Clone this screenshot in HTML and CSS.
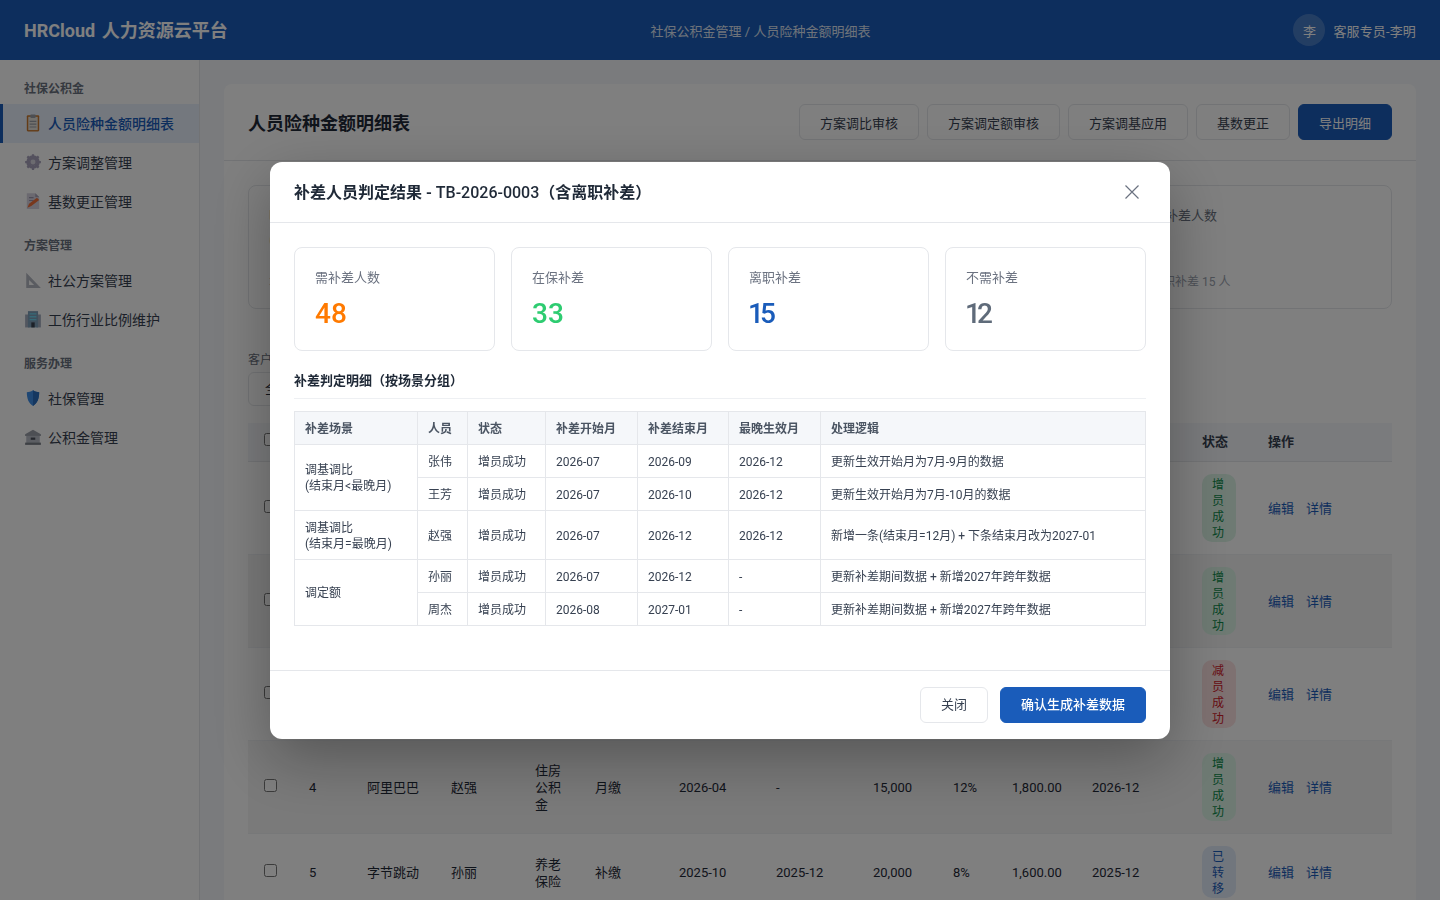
FILE: index.html
```html
<!DOCTYPE html>
<html lang="zh-CN">
<head>
	<meta charset="utf-8">
	<title>人员险种金额明细表 - HRCloud</title>
	<link rel="stylesheet" href="styles.css">
</head>
<body>
	<header class="topbar">
		<div class="logo">HRCloud 人力资源云平台</div>
		<div class="crumb">社保公积金管理 / 人员险种金额明细表</div>
		<div class="user">
			<span class="avatar">李</span>
			<span class="user-name">客服专员-李明</span>
		</div>
	</header>

	<div class="layout">
		<aside class="sidebar">
			<div class="nav-group">社保公积金</div>
			<a class="nav-item active">
				<svg class="nav-icon" viewBox="0 0 16 16"><rect x="2.500" y="1" width="11" height="14.500" rx="1" fill="#c9782f"/><rect x="3.800" y="2.500" width="8.400" height="11.800" fill="#e6e2da"/><rect x="5.500" y="0.500" width="5" height="3" rx="1" fill="#9a9ea6"/><path d="M5 6.500h6M5 9h6M5 11.500h6" stroke="#9a9ea6" stroke-width="1"/></svg>
				<span>人员险种金额明细表</span>
			</a>
			<a class="nav-item">
				<svg class="nav-icon" viewBox="0 0 16 16"><circle cx="8" cy="8" r="4.500" fill="none" stroke="#a9a3bd" stroke-width="3"/><path d="M8 1v14M1 8h14M3 3l10 10M13 3L3 13" stroke="#a9a3bd" stroke-width="2"/><circle cx="8" cy="8" r="2.200" fill="#d8d6e0"/></svg>
				<span>方案调整管理</span>
			</a>
			<a class="nav-item">
				<svg class="nav-icon" viewBox="0 0 16 16"><path d="M2.500 1h7.500l3.500 3.500V15h-11z" fill="#d6d3e0"/><path d="M10 1v3.500h3.500z" fill="#a9a5b8"/><path d="M4.500 5h4M4.500 7.500h4" stroke="#9a94ad"/><path d="M3 14l1.500-3.500 7-5.500 2 2-7 5.500z" fill="#f2703a"/></svg>
				<span>基数更正管理</span>
			</a>

			<div class="nav-group">方案管理</div>
			<a class="nav-item">
				<svg class="nav-icon" viewBox="0 0 16 16"><path fill-rule="evenodd" d="M2 1.500L15 15H2zM4.500 8v4.500h4.500z" fill="#b4b8c2"/></svg>
				<span>社公方案管理</span>
			</a>
			<a class="nav-item">
				<svg class="nav-icon" viewBox="0 0 16 16"><rect x="1" y="4" width="4" height="11.500" fill="#a4adbf"/><rect x="11" y="4" width="4" height="11.500" fill="#a4adbf"/><rect x="3.500" y="1" width="9" height="14.500" fill="#7f9fb8"/><path d="M5 3.500h6M5 6h6M5 8.500h6" stroke="#6fd3ed" stroke-width="1.200"/><rect x="6.500" y="11" width="3" height="4.500" fill="#3b4250"/></svg>
				<span>工伤行业比例维护</span>
			</a>

			<div class="nav-group">服务办理</div>
			<a class="nav-item">
				<svg class="nav-icon" viewBox="0 0 16 16"><path d="M8 1c2 1.300 3.800 1.700 5.500 1.800 0 5.500-1.500 9.700-5.500 12.200-4-2.500-5.500-6.700-5.500-12.200C4.200 2.700 6 2.300 8 1z" fill="#3f8fe8"/><path d="M8 1c2 1.300 3.800 1.700 5.500 1.800 0 5.500-1.500 9.700-5.500 12.200z" fill="#2a6fc0"/></svg>
				<span>社保管理</span>
			</a>
			<a class="nav-item">
				<svg class="nav-icon" viewBox="0 0 16 16"><path d="M8 1.500L15 5.500v1.500H1V5.500z" fill="#9b9fa9"/><rect x="2" y="7" width="12" height="6.500" fill="#b9bdc6"/><rect x="6" y="8.500" width="4" height="2" fill="#4a4f5a"/><rect x="1" y="13" width="14" height="2" fill="#7b8089"/></svg>
				<span>公积金管理</span>
			</a>
		</aside>

		<main class="content">
			<section class="card">
				<div class="card-head">
					<h1>人员险种金额明细表</h1>
					<div class="actions">
						<button class="btn">方案调比审核</button>
						<button class="btn">方案调定额审核</button>
						<button class="btn">方案调基应用</button>
						<button class="btn">基数更正</button>
						<button class="btn primary">导出明细</button>
					</div>
				</div>
				<div class="card-body">
					<div class="summary">
						<div class="summary-item"><div class="summary-label">明细总人数</div><div class="summary-num">60</div><div class="summary-sub">本月新增 12 人</div></div>
						<div class="summary-item"><div class="summary-label">增员成功</div><div class="summary-num">33</div><div class="summary-sub">较上月增加 5 人</div></div>
						<div class="summary-item"><div class="summary-label">减员成功</div><div class="summary-num">15</div><div class="summary-sub">较上月减少 2 人</div></div>
						<div class="summary-item"><div class="summary-label">本月补差人数</div><div class="summary-num">48</div><div class="summary-sub">含离职补差 15 人</div></div>
					</div>

					<div class="filter">
						<label>客户名称</label>
						<div class="select">全部客户</div>
					</div>

					<table class="list">
						<colgroup>
							<col class="c-check"><col class="c-no"><col class="c-cust"><col class="c-name"><col class="c-kind"><col class="c-type"><col class="c-start"><col class="c-end"><col class="c-base"><col class="c-rate"><col class="c-amt"><col class="c-late"><col class="c-state"><col class="c-op">
						</colgroup>
						<thead>
							<tr><th><input type="checkbox"></th><th>序号</th><th>客户</th><th>人员</th><th>险种</th><th>类型</th><th>开始月</th><th>结束月</th><th>基数</th><th>比例</th><th>金额</th><th>最晚月</th><th>状态</th><th>操作</th></tr>
						</thead>
						<tbody>
							<tr><td><input type="checkbox"></td><td>1</td><td>腾讯科技</td><td>张伟</td><td>养老保险</td><td>月缴</td><td>2026-01</td><td>-</td><td>18,000</td><td>8%</td><td>1,440.00</td><td>2026-12</td><td><span class="badge ok">增员成功</span></td><td><a class="link">编辑</a><a class="link">详情</a></td></tr>
							<tr><td><input type="checkbox"></td><td>2</td><td>华为技术</td><td>王芳</td><td>医疗保险</td><td>月缴</td><td>2026-02</td><td>-</td><td>16,000</td><td>2%</td><td>320.00</td><td>2026-12</td><td><span class="badge ok">增员成功</span></td><td><a class="link">编辑</a><a class="link">详情</a></td></tr>
							<tr><td><input type="checkbox"></td><td>3</td><td>美团点评</td><td>周杰</td><td>失业保险</td><td>月缴</td><td>2026-03</td><td>2026-06</td><td>12,000</td><td>1%</td><td>120.00</td><td>2026-12</td><td><span class="badge bad">减员成功</span></td><td><a class="link">编辑</a><a class="link">详情</a></td></tr>
							<tr><td><input type="checkbox"></td><td>4</td><td>阿里巴巴</td><td>赵强</td><td>住房公积金</td><td>月缴</td><td>2026-04</td><td>-</td><td>15,000</td><td>12%</td><td>1,800.00</td><td>2026-12</td><td><span class="badge ok">增员成功</span></td><td><a class="link">编辑</a><a class="link">详情</a></td></tr>
							<tr><td><input type="checkbox"></td><td>5</td><td>字节跳动</td><td>孙丽</td><td>养老保险</td><td>补缴</td><td>2025-10</td><td>2025-12</td><td>20,000</td><td>8%</td><td>1,600.00</td><td>2025-12</td><td><span class="badge info">已转移</span></td><td><a class="link">编辑</a><a class="link">详情</a></td></tr>
						</tbody>
					</table>
				</div>
			</section>
		</main>
	</div>

	<div class="mask">
		<div class="modal">
			<div class="modal-head">
				<div class="modal-title">补差人员判定结果 - <span class="modal-code">TB-2026-0003</span>（含离职补差）</div>
				<svg class="close" viewBox="0 0 14 14"><path d="M0.500 0.500L13.500 13.500M13.500 0.500L0.500 13.500" stroke="#6b7280" stroke-width="1.200" fill="none"/></svg>
			</div>
			<div class="modal-body">
				<div class="stats">
					<div class="stat"><div class="stat-label">需补差人数</div><div class="stat-num orange">48</div></div>
					<div class="stat"><div class="stat-label">在保补差</div><div class="stat-num green">33</div></div>
					<div class="stat"><div class="stat-label">离职补差</div><div class="stat-num blue tight">15</div></div>
					<div class="stat"><div class="stat-label">不需补差</div><div class="stat-num gray tight">12</div></div>
				</div>
				<div class="sub-title">补差判定明细（按场景分组）</div>
				<table class="detail">
					<colgroup>
						<col class="d-scene"><col class="d-name"><col class="d-state"><col class="d-month"><col class="d-month-mid"><col class="d-month"><col class="d-logic">
					</colgroup>
					<thead>
						<tr><th>补差场景</th><th>人员</th><th>状态</th><th>补差开始月</th><th>补差结束月</th><th>最晚生效月</th><th>处理逻辑</th></tr>
					</thead>
					<tbody>
						<tr><td rowspan="2">调基调比<br>(结束月&lt;最晚月)</td><td>张伟</td><td>增员成功</td><td>2026-07</td><td>2026-09</td><td>2026-12</td><td>更新生效开始月为7月-9月的数据</td></tr>
						<tr><td>王芳</td><td>增员成功</td><td>2026-07</td><td>2026-10</td><td>2026-12</td><td>更新生效开始月为7月-10月的数据</td></tr>
						<tr><td>调基调比<br>(结束月=最晚月)</td><td>赵强</td><td>增员成功</td><td>2026-07</td><td>2026-12</td><td>2026-12</td><td>新增一条(结束月=12月) + 下条结束月改为2027-01</td></tr>
						<tr><td rowspan="2">调定额</td><td>孙丽</td><td>增员成功</td><td>2026-07</td><td>2026-12</td><td>-</td><td>更新补差期间数据 + 新增2027年跨年数据</td></tr>
						<tr><td>周杰</td><td>增员成功</td><td>2026-08</td><td>2027-01</td><td>-</td><td>更新补差期间数据 + 新增2027年跨年数据</td></tr>
					</tbody>
				</table>
			</div>
			<div class="modal-foot">
				<button class="btn">关闭</button>
				<button class="btn confirm">确认生成补差数据</button>
			</div>
		</div>
	</div>
</body>
</html>
```
FILE: styles.css
```css
* {
	box-sizing: border-box;
}

html, body {
	height: 100%;
}

body {
	margin: 0;
	overflow: hidden;
	background: #f5f7fa;
	color: #1f2937;
	font-family: Roboto, "Noto Sans CJK SC", sans-serif;
	font-size: 13px;
}

.topbar {
	display: flex;
	align-items: center;
	justify-content: space-between;
	height: 60px;
	padding: 0 24px;
	background: #1a5cba;
	color: #fff;
}

.logo {
	padding-bottom: 2px;
	font-size: 18px;
	font-weight: 700;
	word-spacing: 2px;
}

.crumb {
	font-size: 13px;
	opacity: 0.85;
}

.user {
	display: flex;
	align-items: center;
	gap: 8px;
	font-size: 13px;
}

.user-name {
	letter-spacing: 0.14px;
}

.avatar {
	display: flex;
	align-items: center;
	justify-content: center;
	width: 32px;
	height: 32px;
	border-radius: 50%;
	background: rgba(255, 255, 255, 0.2);
}

.layout {
	display: flex;
	height: 840px;
}

.sidebar {
	flex: none;
	width: 200px;
	padding-top: 16px;
	background: #fff;
	border-right: 1px solid #e5e7eb;
}

.nav-group {
	height: 28px;
	padding-left: 24px;
	color: #6b7280;
	font-size: 12px;
	font-weight: 700;
	line-height: 26px;
}

.nav-group:not(:first-child) {
	height: 25px;
	margin-top: 15px;
	line-height: 20px;
}

.nav-item {
	display: flex;
	align-items: center;
	gap: 6px;
	height: 39px;
	padding: 0 0 2px 24px;
	color: #374151;
	font-size: 14px;
}

.nav-item.active {
	padding-left: 21px;
	border-left: 3px solid #1a5cba;
	background: #e8f0fc;
	color: #1a5cba;
	font-weight: 500;
}

.nav-icon {
	flex: none;
	width: 18px;
	height: 18px;
}

.content {
	flex: 1;
	padding: 24px;
	min-width: 0;
}

.card {
	height: 900px;
	background: #fff;
	border-radius: 8px;
}

.card-head {
	display: flex;
	align-items: center;
	justify-content: space-between;
	height: 77px;
	padding: 0 24px;
	border-bottom: 1px solid #e5e7eb;
}

.card-head h1 {
	margin: 0;
	font-size: 18px;
	font-weight: 700;
}

.actions {
	display: flex;
	gap: 8px;
}

.btn {
	height: 36px;
	padding: 0 20px;
	border: 1px solid #e5e7eb;
	border-radius: 6px;
	background: #fff;
	color: #374151;
	font: inherit;
	font-size: 13px;
}

.btn.primary,
.btn.confirm {
	border-color: #1a5cba;
	background: #1a5cba;
	color: #fff;
}

.btn.confirm {
	font-weight: 500;
}

.card-body {
	padding: 24px;
}

.summary {
	display: grid;
	grid-template-columns: repeat(4, 1fr);
	gap: 16px;
	height: 124px;
}

.summary-item {
	padding: 20px 20px 0;
	border: 1px solid #e5e7eb;
	border-radius: 8px;
}

.summary-label {
	color: #6b7280;
	font-size: 13px;
	line-height: 20px;
}

.summary-num {
	height: 48px;
	font-size: 24px;
	font-weight: 700;
}

.summary-sub {
	color: #9ca3af;
	font-size: 12px;
	line-height: 16px;
}

.filter {
	margin-top: 43px;
}

.filter label {
	display: block;
	height: 20px;
	color: #6b7280;
	font-size: 12px;
	line-height: 16px;
}

.select {
	width: 200px;
	height: 34px;
	padding-left: 16px;
	border: 1px solid #e5e7eb;
	border-radius: 6px;
	line-height: 32px;
}

.list {
	width: 1144px;
	margin-top: 17px;
	border-collapse: collapse;
	table-layout: fixed;
	line-height: 17px;
}

.c-check { width: 45px; }
.c-no { width: 58px; }
.c-cust { width: 84px; }
.c-name { width: 84px; }
.c-kind { width: 60px; }
.c-type { width: 84px; }
.c-start { width: 97px; }
.c-end { width: 97px; }
.c-base { width: 80px; }
.c-rate { width: 59px; }
.c-amt { width: 80px; }
.c-late { width: 110px; }
.c-state { width: 66px; }
.c-op { width: 140px; }

.list th {
	height: 38px;
	padding: 0 16px;
	border-bottom: 1px solid #e5e7eb;
	background: #f5f7fa;
	color: #374151;
	font-weight: 700;
	text-align: left;
	white-space: nowrap;
}

.list td {
	padding: 13px 16px 11px;
	border-bottom: 1px solid #eef0f3;
	vertical-align: middle;
}

.list td:nth-child(13) {
	padding-top: 12px;
	padding-bottom: 12px;
}

.list tbody tr:nth-child(even) {
	background: #f5f5f5;
}

.list input {
	display: block;
	width: 13px;
	height: 13px;
	margin: 0 0 4px;
}

.badge {
	display: block;
	width: 34px;
	padding: 3px 10px 1px;
	border-radius: 10px;
	font-size: 12px;
	line-height: 16px;
}

.badge.ok {
	background: #dcf5e7;
	color: #0e8a4a;
}

.badge.bad {
	background: #fde2e2;
	color: #d0202a;
}

.badge.info {
	background: #e3ecfb;
	color: #1a5cba;
}

.link {
	margin-right: 12px;
	color: #1a5cba;
}

.mask {
	position: fixed;
	inset: 0;
	display: flex;
	align-items: center;
	justify-content: center;
	background: rgba(0, 0, 0, 0.5);
}

.modal {
	width: 900px;
	border-radius: 12px;
	background: #fff;
	box-shadow: 0 20px 60px rgba(0, 0, 0, 0.3);
}

.modal-head {
	display: flex;
	align-items: center;
	justify-content: space-between;
	height: 61px;
	padding: 0 31px 0 24px;
	border-bottom: 1px solid #e5e7eb;
}

.modal-title {
	padding-bottom: 2px;
	font-size: 16px;
	font-weight: 600;
}

.modal-code {
	font-weight: 500;
}

.close {
	width: 14px;
	height: 14px;
}

.modal-body {
	height: 447px;
	padding: 24px;
}

.stats {
	display: grid;
	grid-template-columns: repeat(4, 1fr);
	gap: 16px;
}

.stat {
	height: 104px;
	padding: 20px;
	border: 1px solid #e5e7eb;
	border-radius: 8px;
}

.stat-label {
	color: #6b7280;
	font-size: 13px;
	line-height: 20px;
}

.stat-num {
	margin-top: 7px;
	font-size: 28px;
	font-weight: 500;
	line-height: 38px;
}

.stat-num.tight {
	margin-left: -1px;
	letter-spacing: -4px;
}

.orange { color: #ff7a00; }
.green { color: #2ecc71; }
.blue { color: #1a5cba; }
.gray { color: #5f6b7a; }

.sub-title {
	margin-top: 20px;
	margin-bottom: 12px;
	padding-bottom: 8px;
	border-bottom: 1px solid #eef0f3;
	font-weight: 600;
	line-height: 19px;
}

.detail {
	width: 851px;
	border-collapse: collapse;
	table-layout: fixed;
	font-size: 12px;
	line-height: 16px;
}

.d-scene { width: 123px; }
.d-name { width: 50px; }
.d-state { width: 78px; }
.d-month { width: 92px; }
.d-month-mid { width: 91px; }
.d-logic { width: 325px; }

.detail th,
.detail td {
	padding: 9px 10px 7px;
	border: 1px solid #e5e7eb;
	text-align: left;
	white-space: nowrap;
}

.detail th {
	height: 33px;
	background: #f5f7fa;
	color: #4b5563;
	font-weight: 600;
}

.detail td {
	color: #374151;
}

.modal-foot {
	display: flex;
	justify-content: flex-end;
	gap: 12px;
	height: 69px;
	padding: 16px 24px;
	border-top: 1px solid #e5e7eb;
}

.modal-foot .btn {
	padding-bottom: 2px;
}
```
